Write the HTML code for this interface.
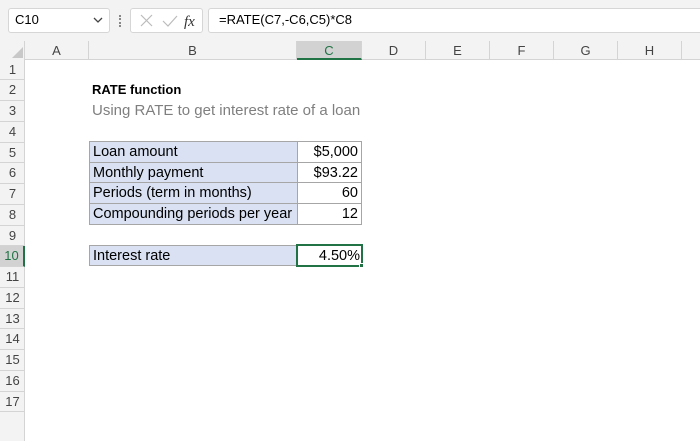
<!DOCTYPE html><html><head><style>
body{margin:0;width:700px;height:400px;overflow:hidden;background:#fff;font-family:"Liberation Sans",sans-serif;position:relative}
.a{position:absolute;box-sizing:border-box}
.t{font-size:14px;color:#000;white-space:nowrap}
</style></head><body>
<div class="a" style="left:0;top:0;width:700px;height:41px;background:#f3f3f3"></div>
<div class="a" style="left:8px;top:8px;width:102px;height:25px;background:#fff;border:1px solid #d6d6d6;border-radius:3px"></div>
<div class="a t" style="left:15px;top:12px;font-size:13px">C10</div>
<svg class="a" style="left:92px;top:15px" width="12" height="10"><path d="M2 3 L6 7 L10 3" stroke="#444" fill="none" stroke-width="1.3"/></svg>
<div class="a" style="left:119px;top:15px;width:2px;height:12px;border-left:2px dotted #888"></div>
<div class="a" style="left:130px;top:8px;width:73px;height:25px;background:#fff;border:1px solid #d6d6d6;border-radius:3px"></div>
<svg class="a" style="left:138px;top:13px" width="60" height="16"><path d="M3 2 L14 13 M14 2 L3 13" stroke="#bbb" stroke-width="1.2"/><path d="M25 8 L30 13 L39 3" stroke="#bbb" fill="none" stroke-width="1.2"/><text x="46" y="13" font-family="Liberation Serif" font-style="italic" font-size="15" fill="#333">fx</text></svg>
<div class="a" style="left:208px;top:8px;width:500px;height:25px;background:#fff;border:1px solid #d6d6d6;border-radius:3px"></div>
<div class="a t" style="left:219px;top:12px;font-size:13px">=RATE(C7,-C6,C5)*C8</div>
<div class="a" style="left:0;top:41px;width:700px;height:19px;background:#f3f3f3;border-bottom:1px solid #d4d4d4"></div>
<div class="a" style="left:0;top:41px;width:25px;height:400px;background:#f3f3f3;border-right:1px solid #d4d4d4"></div>
<svg class="a" style="left:10px;top:46px" width="14" height="13"><path d="M13 1 L13 12 L2 12 Z" fill="#c8c8c8"/></svg>
<div id="cols"></div><div id="rows"></div>
<script>
var cx=[25,89,297,362,426,490,554,618,682,760],n="ABCDEFGH";
for(var i=0;i<9;i++){var d=document.createElement('div');d.className='a';d.style.cssText='left:'+cx[i]+'px;top:41px;width:'+(cx[i+1]-cx[i])+'px;height:19px;border-right:1px solid #d4d4d4;text-align:center;font-size:13px;line-height:19px;color:#444;'+(i==2?'background:#d2d2d2;border-bottom:2px solid #217346;color:#217346;':'');d.textContent=n[i]||'';document.body.appendChild(d);}
for(var r=1;r<=17;r++){var y=59.5+(r-1)*20.75;var d=document.createElement('div');d.className='a';d.style.cssText='left:0;top:'+y+'px;width:25px;height:20.75px;border-bottom:1px solid #d4d4d4;text-align:center;font-size:13px;line-height:20px;color:#444;'+(r==10?'background:#d2d2d2;border-right:2px solid #217346;color:#217346;':'');d.textContent=r;document.body.appendChild(d);}
</script>
<div class="a t" style="left:92px;top:82px;font-weight:bold;font-size:13px">RATE function</div>
<div class="a t" style="left:92px;top:102px;font-size:15px;color:#7f7f7f">Using RATE to get interest rate of a loan</div>
<div class="a" style="left:89px;top:141px;width:273px;height:84px;border:1px solid #a6a6a6"></div>
<div class="a" style="left:89px;top:141px;width:209px;height:84px;background:#d9e1f2;border:1px solid #a6a6a6"></div>
<div class="a" style="left:89px;top:162px;width:273px;height:21px;border-top:1px solid #a6a6a6;border-bottom:1px solid #a6a6a6"></div>
<div class="a" style="left:89px;top:203px;width:273px;height:1px;background:#a6a6a6"></div>
<div class="a t" style="left:93px;top:144px;font-size:14.5px">Loan amount</div>
<div class="a t" style="left:93px;top:165px;font-size:14.5px">Monthly payment</div>
<div class="a t" style="left:93px;top:185px;font-size:14.5px">Periods (term in months)</div>
<div class="a t" style="left:93px;top:206px;font-size:14.5px">Compounding periods per year</div>
<div class="a t" style="left:298px;width:60px;text-align:right;top:144px;font-size:14.5px">$5,000</div>
<div class="a t" style="left:298px;width:60px;text-align:right;top:165px;font-size:14.5px">$93.22</div>
<div class="a t" style="left:298px;width:60px;text-align:right;top:185px;font-size:14.5px">60</div>
<div class="a t" style="left:298px;width:60px;text-align:right;top:206px;font-size:14.5px">12</div>
<div class="a" style="left:89px;top:245px;width:273px;height:21px;border:1px solid #a6a6a6"></div>
<div class="a" style="left:89px;top:245px;width:209px;height:21px;background:#d9e1f2;border:1px solid #a6a6a6"></div>
<div class="a t" style="left:93px;top:248px;font-size:14.5px">Interest rate</div>
<div class="a" style="left:296px;top:244px;width:67px;height:23px;border:2px solid #217346"></div>
<div class="a" style="left:359px;top:263px;width:5px;height:5px;background:#217346;border:1px solid #fff"></div>
<div class="a t" style="left:298px;width:62px;text-align:right;top:248px;font-size:14.5px">4.50%</div>
</body></html>
